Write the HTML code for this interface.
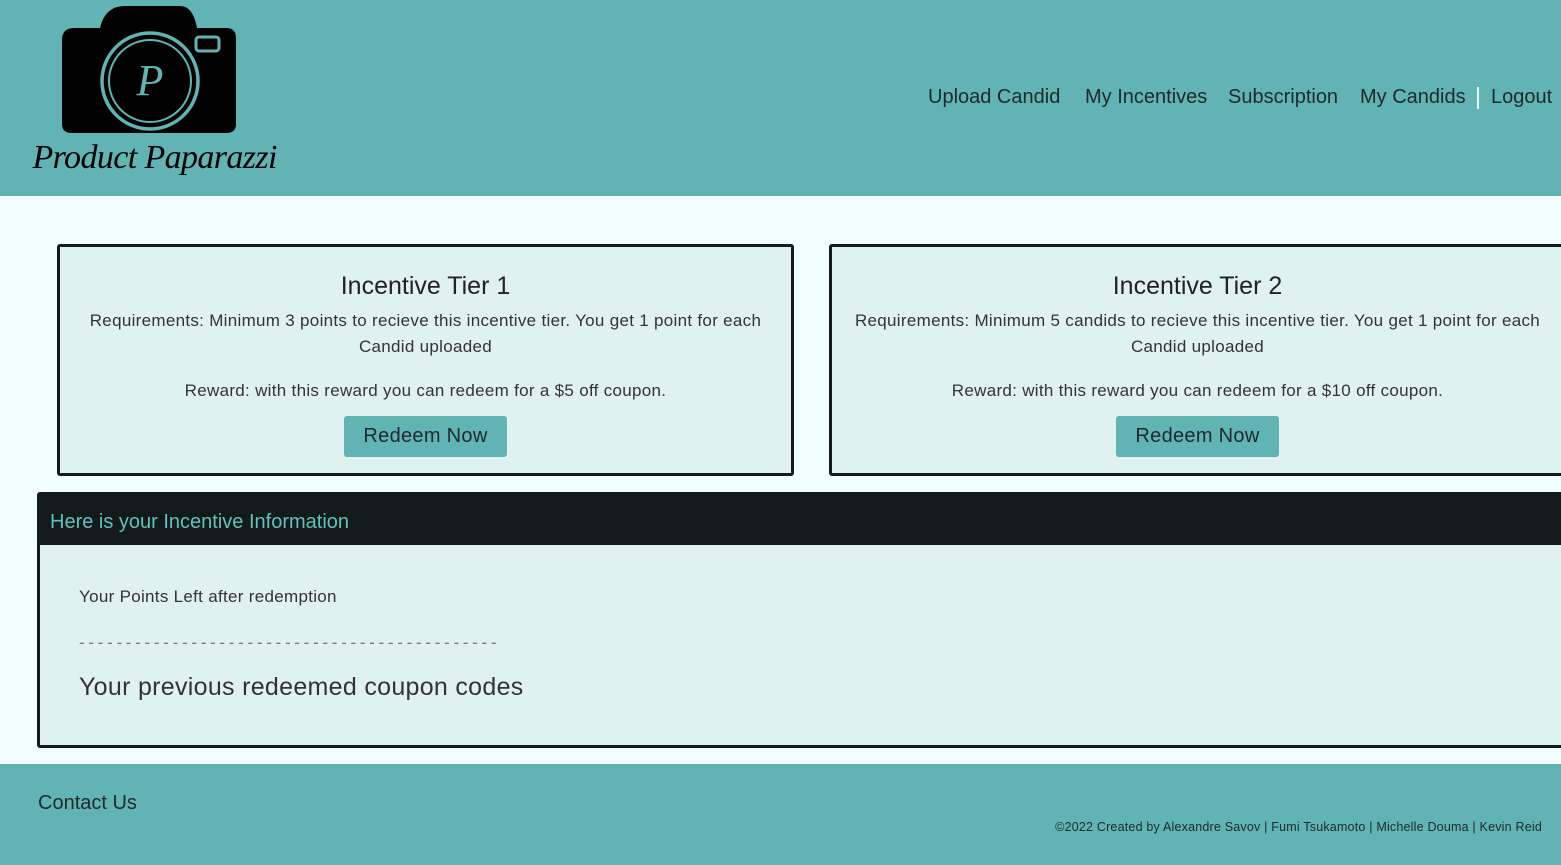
<!DOCTYPE html>
<html><head><style>
body{margin:0;width:1561px;height:865px;overflow:hidden;background:#f0fffd;font-family:"Liberation Sans",sans-serif;color:#222;position:relative}
.hdr{position:absolute;left:0;top:0;width:1561px;height:196px;background:#62b3b3}
.nav{position:absolute;top:86px;font-size:20px;color:#1e2a2a;white-space:nowrap}
.card{position:absolute;top:244px;height:232px;border:3px solid #151a1a;border-radius:3px;background:#e0f2f0;text-align:center;box-sizing:border-box}
.card h2{font-weight:normal;font-size:25px;margin:25px 0 7px}
.card p{margin:0;font-size:17px;line-height:26px;color:#333;letter-spacing:0.3px}
.btn{display:inline-block;background:#62b3b3;color:#1e2a2a;font-size:20px;padding:9px 19px;border-radius:3px;margin-top:12px;letter-spacing:0.3px}
.info{position:absolute;left:37px;top:492px;width:1540px;height:256px;border:3px solid #151a1a;border-radius:3px;background:#e0f2f0;box-sizing:border-box}
.ih{height:50px;background:#131a1a;color:#62c0c0;font-size:20px;line-height:54px;padding-left:10px}
.foot{position:absolute;left:0;top:764px;width:1561px;height:101px;background:#62b3b3}
</style></head><body>
<div class="hdr">
<svg width="300" height="196" style="position:absolute;left:0;top:0">
<path d="M62 40 Q62 28 74 28 L100 28 Q105 6 125 6 L180 6 Q193 6 197 28 L226 28 Q236 28 236 38 L236 124 Q236 133 226 133 L72 133 Q62 133 62 124 Z" fill="#000"/>
<rect x="196" y="37" width="23" height="14" rx="3" fill="none" stroke="#62b3b3" stroke-width="3"/>
<circle cx="150" cy="81" r="48" fill="none" stroke="#62b3b3" stroke-width="3.5"/>
<circle cx="150" cy="81" r="41" fill="none" stroke="#62b3b3" stroke-width="2"/>
<text x="150" y="95" font-family="Liberation Serif,serif" font-style="italic" font-size="44" fill="#62b3b3" text-anchor="middle">P</text>
<text x="155" y="168" font-family="Liberation Serif,serif" font-style="italic" font-size="34" fill="#000" text-anchor="middle" textLength="245">Product Paparazzi</text>
</svg>
<span class="nav" style="left:928px">Upload Candid</span>
<span class="nav" style="left:1085px">My Incentives</span>
<span class="nav" style="left:1228px">Subscription</span>
<span class="nav" style="left:1360px">My Candids</span>
<span style="position:absolute;left:1477px;top:87px;width:2px;height:22px;background:#e8ffff"></span>
<span class="nav" style="left:1491px">Logout</span>
</div>
<div class="card" style="left:57px;width:737px">
<h2>Incentive Tier 1</h2>
<p>Requirements: Minimum 3 points to recieve this incentive tier. You get 1 point for each<br>Candid uploaded</p>
<p style="margin-top:18px">Reward: with this reward you can redeem for a $5 off coupon.</p>
<span class="btn">Redeem Now</span>
</div>
<div class="card" style="left:829px;width:737px">
<h2>Incentive Tier 2</h2>
<p>Requirements: Minimum 5 candids to recieve this incentive tier. You get 1 point for each<br>Candid uploaded</p>
<p style="margin-top:18px">Reward: with this reward you can redeem for a $10 off coupon.</p>
<span class="btn">Redeem Now</span>
</div>
<div class="info">
<div class="ih">Here is your Incentive Information</div>
<div style="position:absolute;left:39px;top:92px;font-size:17px;color:#333;letter-spacing:0.3px">Your Points Left after redemption</div>
<div style="position:absolute;left:39px;top:138px;font-size:17px;color:#777;letter-spacing:3.7px">---------------------------------------------</div>
<div style="position:absolute;left:39px;top:178px;font-size:25px;color:#333;letter-spacing:0.3px">Your previous redeemed coupon codes</div>
</div>
<div class="foot">
<div style="position:absolute;left:38px;top:28px;font-size:20px;color:#1e2a2a">Contact Us</div>
<div style="position:absolute;right:19px;top:56px;font-size:12.5px;color:#1e2a2a;letter-spacing:0.2px">©2022 Created by Alexandre Savov | Fumi Tsukamoto | Michelle Douma | Kevin Reid</div>
</div>
</body></html>
